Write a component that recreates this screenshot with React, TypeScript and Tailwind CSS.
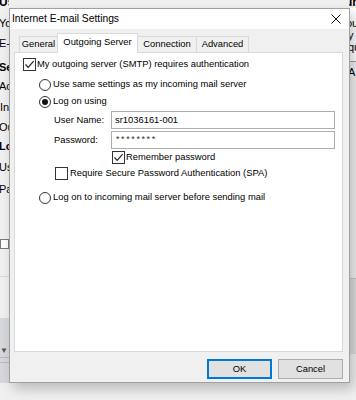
import React from "react";

const font = { fontFamily: '"Liberation Sans", Arial, sans-serif' };

function CheckBox({ checked }: { checked?: boolean }) {
  return (
    <span className="flex h-[13px] w-[13px] shrink-0 items-center justify-center border border-[#333333] bg-white">
      {checked && (
        <svg width="11" height="11" viewBox="0 0 11 11">
          <path d="M1.5 5.5 L4.2 8.3 L9.6 2.2" fill="none" stroke="#222" strokeWidth="1.2" />
        </svg>
      )}
    </span>
  );
}

function Radio({ checked }: { checked?: boolean }) {
  return (
    <span className="flex h-[12px] w-[12px] shrink-0 items-center justify-center rounded-full border border-[#333333] bg-white">
      {checked && <span className="h-[6px] w-[6px] rounded-full bg-[#111]" />}
    </span>
  );
}

export default function App() {
  return (
    <div className="relative h-[400px] w-[356px] overflow-hidden bg-[#f0f0f0] text-[9.4px] text-black" style={font}>
      {/* background window (Outlook account settings) */}
      <div className="flex h-full">
        <div className="flex w-[9px] flex-col overflow-hidden whitespace-nowrap text-[11px] leading-none">
          <div className="-mt-[4px] -ml-[1px] text-[12px] font-bold">User Information</div>
          <div className="mt-[10px] -ml-[1px]">Your Name:</div>
          <div className="mt-[9px] -ml-[1px]">E-mail Address:</div>
          <div className="mt-[13px] -ml-[1px] font-bold">Server Information</div>
          <div className="mt-[8px] -ml-[1px]">Account Type:</div>
          <div className="mt-[10px]">Incoming mail server:</div>
          <div className="mt-[9px] -ml-[1px]">Outgoing mail server (SMTP):</div>
          <div className="mt-[8px] -ml-[1px] font-bold">Logon Information</div>
          <div className="mt-[10px] -ml-[1px]">User Name:</div>
          <div className="mt-[11px] -ml-[1px]">Password:</div>
          <div className="mt-[44px] h-[10px] border border-[#7a7a7a] bg-white" />
          <div className="h-[28px] border-b border-[#d8d8d8]" />
          <div className="mt-[41px] flex h-[65px] flex-col bg-[#d6d8dc]">
            <div className="mt-[29px] text-[8px] text-[#555]">▼</div>
            <div className="mt-[2px] h-[1px] bg-[#bbbbbb]" />
            <div className="mt-[4px] h-[1px] bg-[#bbbbbb]" />
          </div>
        </div>
        <div className="flex-1" />
        <div className="flex w-[7px] flex-col overflow-hidden whitespace-nowrap text-[11px] leading-none">
          <div className="-mt-[4px] -ml-[60px] text-[12px] font-bold">Test Account Settings</div>
          <div className="flex h-[53px] flex-col bg-white">
            <div className="mt-[10px] -ml-[3px]">ou</div>
            <div className="mt-[1px] -ml-[1px]">y</div>
            <div className="mt-[1px] -ml-[1px]">qu</div>
          </div>
          <div className="h-[1px] bg-[#a0a0a0]" />
          <div className="mt-[5px] -ml-[1px]">A</div>
          <div className="mt-[200px] h-[1px] bg-[#c8c8c8]" />
          <div className="h-[75px] bg-[#dcdcdc]" />
        </div>
      </div>

      {/* dialog */}
      <div className="absolute left-[9px] top-[8px] flex h-[375px] w-[341px] flex-col border border-[#a0a0a0] bg-[#f0f0f0] shadow-[4px_6px_12px_rgba(0,0,0,0.22)]">
        <div className="flex h-[20px] items-center justify-between bg-white pl-[2px] pr-[8px] text-[10.3px]">
          <span>Internet E-mail Settings</span>
          <svg width="10" height="10" viewBox="0 0 10 10">
            <path d="M0.5 0.5 L9.5 9.5 M9.5 0.5 L0.5 9.5" stroke="#111" strokeWidth="1" />
          </svg>
        </div>

        <div className="flex flex-1 flex-col pl-[4px] pr-[6px] pt-[4px]">
          <div className="flex items-end whitespace-nowrap pl-[5px]">
            <div className="flex h-[16px] w-[38px] items-center justify-center border border-r-0 border-b-0 border-[#d9d9d9] bg-[#f0f0f0]">
              General
            </div>
            <div className="relative z-10 -mb-[1px] flex h-[20px] w-[81px] items-center justify-center border border-b-0 border-[#d9d9d9] bg-white pb-[2px]">
              Outgoing Server
            </div>
            <div className="flex h-[16px] w-[59px] items-center justify-center border border-l-0 border-b-0 border-[#d9d9d9] bg-[#f0f0f0]">
              Connection
            </div>
            <div className="flex h-[16px] w-[52px] items-center justify-center border border-l-0 border-b-0 border-[#d9d9d9] bg-[#f0f0f0]">
              Advanced
            </div>
          </div>

          <div className="flex h-[300px] flex-col whitespace-nowrap border border-[#d9d9d9] bg-white">
            <div className="mt-[5px] flex h-[13px] items-center gap-[1px] pl-[8px]">
              <CheckBox checked />
              <span>My outgoing server (SMTP) requires authentication</span>
            </div>
            <div className="mt-[7px] flex h-[13px] items-center gap-[2px] pl-[24px]">
              <Radio />
              <span>Use same settings as my incoming mail server</span>
            </div>
            <div className="mt-[4px] flex h-[13px] items-center gap-[2px] pl-[24px]">
              <Radio checked />
              <span>Log on using</span>
            </div>
            <div className="mt-[3px] flex h-[18px] items-center pl-[39px] pr-[7px]">
              <span className="w-[57px]">User Name:</span>
              <div className="flex h-[18px] flex-1 items-center border border-[#abadb3] bg-white pl-[3px]">
                sr1036161-001
              </div>
            </div>
            <div className="mt-[2px] flex h-[18px] items-center pl-[39px] pr-[7px]">
              <span className="w-[57px]">Password:</span>
              <div className="flex h-[18px] flex-1 items-center border border-[#abadb3] bg-white pl-[4px] text-[9px] tracking-[1.6px] text-[#333]">
                ********
              </div>
            </div>
            <div className="mt-[2px] flex h-[13px] items-center gap-[1px] pl-[97px]">
              <CheckBox checked />
              <span>Remember password</span>
            </div>
            <div className="mt-[3px] flex h-[13px] items-center gap-[2px] pl-[40px]">
              <CheckBox />
              <span>Require Secure Password Authentication (SPA)</span>
            </div>
            <div className="mt-[11px] flex h-[13px] items-center gap-[2px] pl-[24px]">
              <Radio />
              <span>Log on to incoming mail server before sending mail</span>
            </div>
          </div>

          <div className="mt-[7px] flex justify-end gap-[6px]">
            <button className="flex h-[20px] w-[65px] items-center justify-center border-2 border-[#0078d7] bg-[#e1e1e1]">
              OK
            </button>
            <button className="flex h-[20px] w-[65px] items-center justify-center border border-[#adadad] bg-[#e1e1e1]">
              Cancel
            </button>
          </div>
        </div>
      </div>
    </div>
  );
}
